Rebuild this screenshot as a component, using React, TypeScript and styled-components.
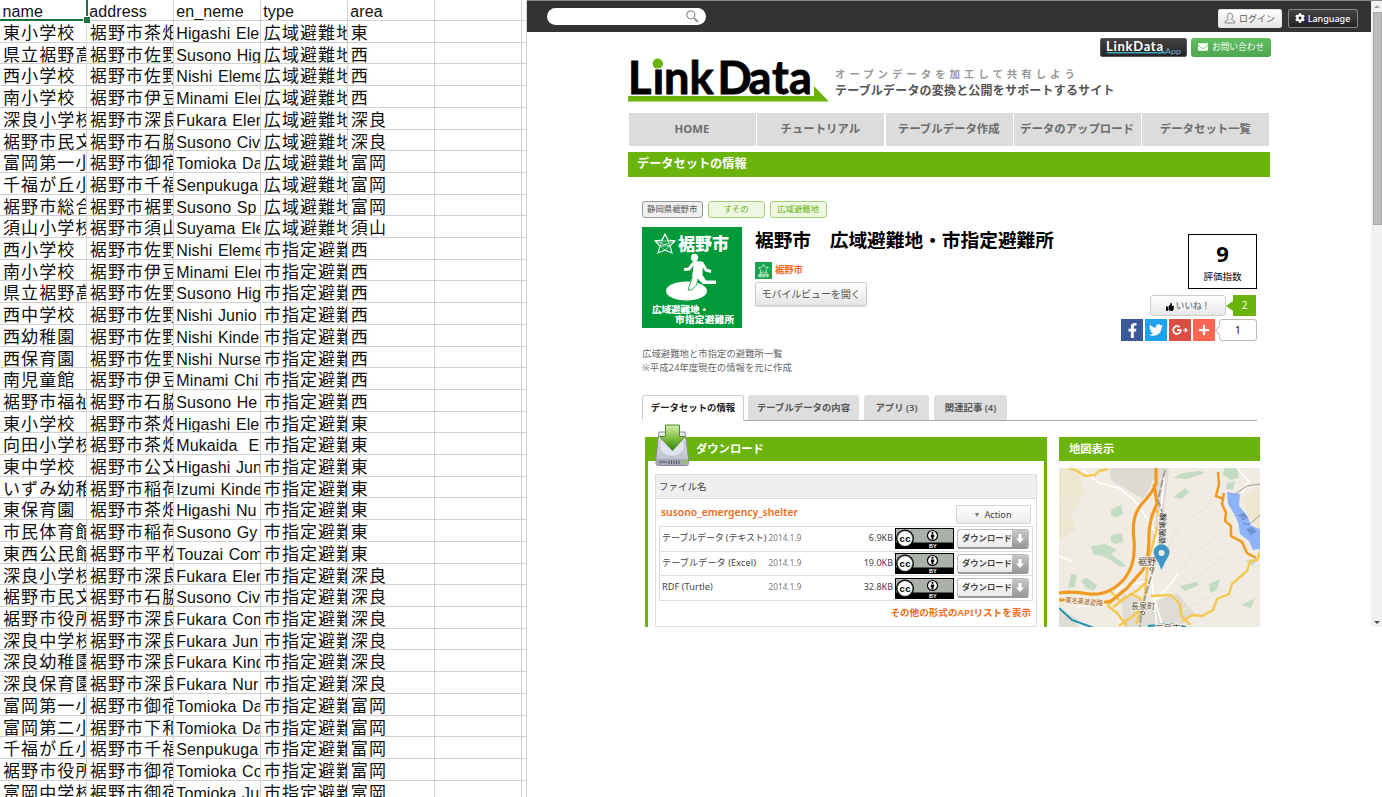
import React from "react";
import styled, { createGlobalStyle } from "styled-components";
import { FaFacebookF, FaTwitter, FaGooglePlusG, FaPlus, FaThumbsUp, FaCog, FaEnvelope } from "react-icons/fa";

const GREEN = "#6ab40c";

const Global = createGlobalStyle`
  *{box-sizing:border-box}
  body{margin:0;background:#fff;overflow:hidden;font-family:"Noto Sans","Noto Sans CJK JP",sans-serif;color:#444}
`;

const Page = styled.div`
  display: flex;
  width: 1382px;
  height: 797px;
  overflow: hidden;
`;

/* ---------- spreadsheet ---------- */

const Sheet = styled.div`
  width: 527px;
  flex: none;
  height: 797px;
  overflow: hidden;
  color: #111;
`;
const SheetRow = styled.div<{ $head?: boolean }>`
  display: grid;
  grid-template-columns: 86.8px 87px 87px 87px 87px 87px 5.2px;
  grid-template-rows: 100%;
  height: ${(p) => (p.$head ? 21 : 21.71)}px;
  ${(p) => p.$head && "line-height: 23px;"}
  ${(p) => !p.$head && "line-height: 26px;"}
`;
const SheetCell = styled.div<{ $latin?: boolean }>`
  position: relative;
  border-right: 1px solid #d3d3d3;
  border-bottom: 1px solid #d0d0d0;
  padding-left: ${(p) => (p.$latin ? 2.5 : 3)}px;
  overflow: hidden;
  white-space: pre;
  font-size: ${(p) => (p.$latin ? 16 : 17)}px;
  letter-spacing: ${(p) => (p.$latin ? 0.1 : 1.1)}px;
  word-spacing: 1px;
  font-family: "Liberation Sans", "Noto Sans CJK JP", sans-serif;
`;
const NameCell = styled(SheetCell)`
  line-height: 25px;
`;
const ActiveCell = styled(SheetCell)`
  overflow: visible;
  border-right: 0;
  &::before {
    content: "";
    position: absolute;
    left: 0;
    right: 4px;
    bottom: -1px;
    height: 2px;
    background: #1a7340;
  }
  &::after {
    content: "";
    position: absolute;
    right: -1px;
    top: 0;
    width: 2px;
    height: 16px;
    background: #1a7340;
  }
`;
const FillHandle = styled.i`
  position: absolute;
  z-index: 1;
  right: -3px;
  bottom: -3px;
  width: 6px;
  height: 6px;
  background: #1a7340;
`;

const H = "広域避難地";
const S = "市指定避難";
const rows: string[][] = [
  ["東小学校", "裾野市茶畑", "Higashi Ele", H, "東"],
  ["県立裾野高", "裾野市佐野", "Susono Hig", H, "西"],
  ["西小学校", "裾野市佐野", "Nishi Eleme", H, "西"],
  ["南小学校", "裾野市伊豆", "Minami Elem", H, "西"],
  ["深良小学校", "裾野市深良", "Fukara Elem", H, "深良"],
  ["裾野市民文", "裾野市石脇", "Susono Civ", H, "深良"],
  ["富岡第一小", "裾野市御宿", "Tomioka Da", H, "富岡"],
  ["千福が丘小", "裾野市千福", "Senpukuga", H, "富岡"],
  ["裾野市総合", "裾野市裾野", "Susono Sp", H, "富岡"],
  ["須山小学校", "裾野市須山", "Suyama Ele", H, "須山"],
  ["西小学校", "裾野市佐野", "Nishi Eleme", S, "西"],
  ["南小学校", "裾野市伊豆", "Minami Elem", S, "西"],
  ["県立裾野高", "裾野市佐野", "Susono Hig", S, "西"],
  ["西中学校", "裾野市佐野", "Nishi Junio", S, "西"],
  ["西幼稚園", "裾野市佐野", "Nishi Kinde", S, "西"],
  ["西保育園", "裾野市佐野", "Nishi Nurse", S, "西"],
  ["南児童館", "裾野市伊豆", "Minami Chi", S, "西"],
  ["裾野市福祉", "裾野市石脇", "Susono He", S, "西"],
  ["東小学校", "裾野市茶畑", "Higashi Ele", S, "東"],
  ["向田小学校", "裾野市茶畑", "Mukaida  E", S, "東"],
  ["東中学校", "裾野市公文", "Higashi Jun", S, "東"],
  ["いずみ幼稚", "裾野市稲荷", "Izumi Kinde", S, "東"],
  ["東保育園", "裾野市茶畑", "Higashi Nu", S, "東"],
  ["市民体育館", "裾野市稲荷", "Susono Gy", S, "東"],
  ["東西公民館", "裾野市平松", "Touzai Com", S, "東"],
  ["深良小学校", "裾野市深良", "Fukara Elem", S, "深良"],
  ["裾野市民文", "裾野市石脇", "Susono Civ", S, "深良"],
  ["裾野市役所", "裾野市深良", "Fukara Com", S, "深良"],
  ["深良中学校", "裾野市深良", "Fukara Jun", S, "深良"],
  ["深良幼稚園", "裾野市深良", "Fukara Kind", S, "深良"],
  ["深良保育園", "裾野市深良", "Fukara Nur", S, "深良"],
  ["富岡第一小", "裾野市御宿", "Tomioka Da", S, "富岡"],
  ["富岡第二小", "裾野市下和", "Tomioka Da", S, "富岡"],
  ["千福が丘小", "裾野市千福", "Senpukuga", S, "富岡"],
  ["裾野市役所", "裾野市御宿", "Tomioka Co", S, "富岡"],
  ["富岡中学校", "裾野市御宿", "Tomioka Ju", S, "富岡"],
];

const Spreadsheet = () => (
  <Sheet>
    <SheetRow $head>
      <ActiveCell $latin>name<FillHandle /></ActiveCell>
      {["address", "en_neme", "type", "area", "", ""].map((t, i) => (
        <SheetCell key={i} $latin>{t}</SheetCell>
      ))}
    </SheetRow>
    {rows.map((r, i) => (
      <SheetRow key={i}>
        {r.map((t, j) => (j === 2 ? <NameCell key={j} $latin>{t}</NameCell> : <SheetCell key={j}>{t}</SheetCell>))}
        <SheetCell /><SheetCell />
      </SheetRow>
    ))}
  </Sheet>
);

/* ---------- browser pane ---------- */

const Browser = styled.div`
  display: flex;
  width: 855px;
  height: 627px;
  overflow: hidden;
`;
const Site = styled.div`
  width: 844px;
  flex: none;
`;
const Scrollbar = styled.div`
  width: 11px;
  display: flex;
  flex-direction: column;
  align-items: center;
  justify-content: space-between;
  background: #f1f1f1;
  border-top: 1px solid #888;
  padding: 4px 0 3px 1px;
`;
const Arrow = styled.i<{ $down?: boolean }>`
  border: 3px solid transparent;
  border-top-width: ${(p) => (p.$down ? 3 : 0)}px;
  border-bottom-width: ${(p) => (p.$down ? 0 : 3)}px;
  border-top-color: #505050;
  border-bottom-color: #a3a3a3;
`;
const Thumb = styled.div`
  width: 9px;
  height: 213px;
  margin: 4px 0 auto;
  background: #bcbcbc;
  border: 1px solid #a9a9a9;
`;

const TopBar = styled.div`
  height: 32px;
  display: flex;
  align-items: center;
  justify-content: space-between;
  padding: 2px 13.5px 0 20px;
  background: #333;
  border-top: 1px solid #888;
`;
const Search = styled.div`
  width: 158.5px;
  height: 16.5px;
  border-radius: 9px;
  background: #fff;
  display: flex;
  justify-content: flex-end;
  align-items: center;
  padding-right: 7px;
  margin-bottom: 2px;
`;
const TopButtons = styled.div`
  display: flex;
  gap: 6px;
  margin-top: 1px;
`;
const TopButton = styled.div<{ $dark?: boolean }>`
  width: ${(p) => (p.$dark ? 70 : 64)}px;
  height: 19px;
  display: flex;
  align-items: center;
  justify-content: center;
  gap: 3px;
  border-radius: 2px;
  white-space: nowrap;
  font-size: 9px;
  border: 1px solid ${(p) => (p.$dark ? "#888" : "#e5e5e5")};
  background: ${(p) => (p.$dark ? "linear-gradient(#444,#222)" : "linear-gradient(#fff,#e6e6e6)")};
  color: ${(p) => (p.$dark ? "#fff" : "#555")};
  font-weight: ${(p) => (p.$dark ? 500 : 400)};
`;

const Content = styled.div`
  width: 643px;
  margin-left: 101px;
`;
const HeaderLinks = styled.div`
  display: flex;
  justify-content: flex-end;
  gap: 4px;
  padding-top: 6px;
  height: 25px;
`;
const AppLink = styled.div`
  width: 87px;
  height: 19px;
  border-radius: 2px;
  border: 1px solid #555;
  background: linear-gradient(#444, #222);
`;
const ContactLink = styled.div`
  width: 80px;
  height: 19px;
  display: flex;
  align-items: center;
  justify-content: center;
  gap: 4px;
  border-radius: 3px;
  background: linear-gradient(#5fbf5f, #4fa64f);
  color: #fff;
  font-size: 8.7px;
  line-height: 14px;
  padding-bottom: 1px;
  white-space: nowrap;
`;
const Brand = styled.div`
  display: flex;
  height: 56px;
`;
const Tagline = styled.div`
  padding: 9px 0 0 6px;
  white-space: nowrap;
`;
const TagSmall = styled.div`
  font-size: 10.5px;
  line-height: 16px;
  letter-spacing: 3.9px;
  color: #999;
  font-weight: 700;
`;
const TagMain = styled.div`
  font-size: 12px;
  line-height: 17px;
  letter-spacing: 0.19px;
  color: #555;
  font-weight: 700;
`;

const Nav = styled.nav`
  display: grid;
  grid-template-columns: repeat(5, 1fr);
  gap: 1.4px;
  width: 640.4px;
  margin: 0 0 6px 1px;
`;
const NavItem = styled.div`
  height: 33px;
  padding: 0 1px 3px 0;
  display: flex;
  align-items: center;
  justify-content: center;
  background: #dcdcdc;
  color: #6c6c6c;
  font-size: 11.4px;
  font-weight: 700;
  white-space: nowrap;
`;
const SectionBar = styled.div`
  width: 642px;
  height: 25px;
  padding-left: 9px;
  background: ${GREEN};
  color: #fff;
  font-size: 12.2px;
  font-weight: 700;
  line-height: 23px;
`;

const Tags = styled.div`
  display: flex;
  gap: 5px;
  padding: 24px 0 0 13.7px;
`;
const Tag = styled.div<{ $w: number; $gray?: boolean }>`
  width: ${(p) => p.$w}px;
  height: 17px;
  border-radius: 3px;
  border: 1px solid ${(p) => (p.$gray ? "#999" : "#a5d175")};
  background: ${(p) => (p.$gray ? "#efefef" : "#edf7e2")};
  color: ${(p) => (p.$gray ? "#555" : GREEN)};
  font-size: 8.4px;
  line-height: 13px;
  text-align: center;
  white-space: nowrap;
`;

const Hero = styled.div`
  display: flex;
  height: 114px;
  margin: 9px 0 0 14px;
`;
const HeroText = styled.div`
  width: 350px;
  margin-left: 13px;
`;
const Title = styled.h1`
  margin: 0;
  font-size: 18.7px;
  line-height: 25px;
  color: #000;
  font-weight: 700;
  white-space: nowrap;
`;
const Owner = styled.div`
  display: flex;
  align-items: center;
  gap: 3px;
  height: 17px;
  margin-top: 10px;
  color: #f26a1b;
  font-size: 9.3px;
  line-height: 14px;
  padding-bottom: 1px;
  font-weight: 700;
`;
const MobileButton = styled.div`
  width: 112px;
  height: 24px;
  margin-top: 3px;
  border: 1px solid #ccc;
  border-radius: 2px;
  background: linear-gradient(#fff, #e6e6e6);
  color: #555;
  font-size: 10.2px;
  letter-spacing: -0.3px;
  line-height: 22px;
  text-align: center;
  white-space: nowrap;
  box-shadow: 0 1px 1px #ddd;
`;
const HeroSide = styled.div`
  flex: 1;
  padding: 7px 14px 0 0;
  display: flex;
  flex-direction: column;
  align-items: flex-end;
`;
const Score = styled.div`
  width: 69px;
  height: 55px;
  border: 1px solid #000;
  text-align: center;
  color: #000;
  font-size: 9.5px;
  line-height: 12px;
  padding-top: 6px;
`;
const ScoreValue = styled.div`
  font: 700 22px/24px "Noto Sans", sans-serif;
  margin-bottom: 6px;
`;
const LikeRow = styled.div`
  display: flex;
  margin-top: 6px;
  height: 21px;
  padding-right: 1px;
`;
const Like = styled.div`
  width: 76px;
  display: flex;
  align-items: center;
  justify-content: center;
  gap: 2px;
  font-size: 8.6px;
  color: #555;
  border: 1px solid #ccc;
  border-radius: 3px;
  background: linear-gradient(#fff, #e8e8e8);
  & svg { color: #000; margin-top: 2px; }
`;
const LikeTip = styled.i`
  width: 7px;
  border: 5px solid transparent;
  border-right: 7px solid ${GREEN};
  border-left: 0;
  align-self: center;
`;
const LikeCount = styled.div`
  width: 23px;
  background: ${GREEN};
  color: #fff;
  font-size: 10px;
  line-height: 21px;
  text-align: center;
`;
const Share = styled.div`
  display: flex;
  gap: 2px;
  margin-top: 3px;
  height: 22px;
`;
const ShareIcon = styled.div<{ $bg: string }>`
  width: 22px;
  display: flex;
  align-items: center;
  justify-content: center;
  background: ${(p) => p.$bg};
  color: #fff;
`;
const ShareCount = styled.div`
  position: relative;
  width: 38px;
  margin-left: 2px;
  border: 1px solid #bbb;
  border-radius: 3px;
  font-size: 11px;
  line-height: 19px;
  text-align: center;
  color: #222;
  &::before {
    content: "";
    position: absolute;
    left: -4px;
    top: 7px;
    width: 6px;
    height: 6px;
    background: #fff;
    border: solid #bbb;
    border-width: 0 0 1px 1px;
    transform: rotate(45deg);
  }
`;

const Description = styled.p`
  margin: 6px 0 0 14px;
  height: 28px;
  font-size: 9.4px;
  line-height: 14px;
  color: #666;
  white-space: nowrap;
`;

const Tabs = styled.div`
  display: flex;
  width: 615px;
  height: 26px;
  margin: 20px 0 0 14px;
  border-bottom: 1px solid #aaa;
`;
const Tab = styled.div<{ $w: number; $on?: boolean }>`
  width: ${(p) => p.$w}px;
  height: ${(p) => (p.$on ? 26 : 25)}px;
  margin-right: ${(p) => (p.$on ? 4 : 5)}px;
  border-radius: 3px 3px 0 0;
  border: 1px solid ${(p) => (p.$on ? "#ccc" : "#dedede")};
  border-bottom: 0;
  background: ${(p) => (p.$on ? "#fff" : "#dedede")};
  color: ${(p) => (p.$on ? "#222" : "#555")};
  font-size: 9.4px;
  font-weight: 600;
  line-height: 24px;
  text-align: center;
  white-space: nowrap;
`;

const Columns = styled.div`
  display: flex;
  gap: 12px;
  margin: 16px 0 0 17px;
`;
const Download = styled.section`
  width: 402px;
  height: 190px;
  border: solid ${GREEN};
  border-width: 0 3px;
`;
const PanelTitle = styled.div<{ $inset: number }>`
  height: 24px;
  display: flex;
  padding-left: ${(p) => p.$inset}px;
  background: ${GREEN};
  color: #fff;
  font-size: 11.3px;
  font-weight: 700;
  line-height: 23px;
`;
const DriveIcon = styled.svg`
  position: relative;
  top: -13px;
  flex: none;
  margin-right: 6px;
`;
const FileTable = styled.div`
  width: 382px;
  height: 153px;
  margin: 13px 0 0 7px;
  border: 1px solid #ddd;
`;
const FileHead = styled.div`
  height: 24px;
  padding-left: 3px;
  background: #efefef;
  border-bottom: 1px solid #ddd;
  font-size: 9.5px;
  line-height: 23px;
`;
const DatasetRow = styled.div`
  height: 27px;
  display: flex;
  justify-content: space-between;
  padding: 5px 5px 0;
`;
const DatasetName = styled.div`
  color: #f26a1b;
  font-size: 10.3px;
  letter-spacing: 0.04px;
  font-weight: 600;
  line-height: 16px;
`;
const ActionButton = styled.div`
  display: flex;
  align-items: center;
  justify-content: center;
  gap: 5px;
  width: 75px;
  height: 19px;
  margin-top: 1px;
  border: 1px solid #d5d5d5;
  border-radius: 2px;
  background: linear-gradient(#fff, #ececec);
  font-size: 9.2px;
`;
const Caret = styled.i`
  border: 2.5px solid transparent;
  border-top: 4px solid #777;
  border-bottom: 0;
`;
const FileRows = styled.div`
  margin: 0 3px;
  border: 1px solid #ddd;
  border-top: 0;
`;
const FileRow = styled.div`
  display: grid;
  grid-template-columns: 106.5px 75px 51.5px 62px 1fr;
  align-items: center;
  height: 24.7px;
  padding-left: 2px;
  border-top: 1px solid #ddd;
  font-size: 9.1px;
  line-height: 20px;
  white-space: nowrap;
`;
const FileName = styled.span<{ $tight?: boolean }>`
  letter-spacing: ${(p) => (p.$tight ? -0.2 : 0.1)}px;
  padding-bottom: 2px;
`;
const FileDate = styled.span`
  font-size: 8.1px;
  letter-spacing: 0.1px;
  padding-bottom: 2px;
  color: #777;
`;
const FileSize = styled.span`
  text-align: right;
  padding: 0 2px 2px 0;
  font-size: 9px;
`;
const DownloadButton = styled.div`
  display: flex;
  width: 72px;
  height: 20px;
  border-radius: 3px;
  border: 1px solid #bbb;
  border-bottom: 2px solid #999;
  background: linear-gradient(#fff, #e9e9e9);
  font-size: 8.3px;
  font-weight: 700;
  line-height: 16px;
  padding-left: 4px;
  justify-content: space-between;
  overflow: hidden;
`;
const DownloadEnd = styled.span`
  width: 16px;
  height: 17px;
  display: flex;
  align-items: center;
  justify-content: center;
  background: linear-gradient(#c8c8c8, #999);
`;
const ApiLink = styled.div`
  padding-right: 5px;
  text-align: right;
  color: #f26a1b;
  font-size: 9.6px;
  font-weight: 600;
  line-height: 23px;
  white-space: nowrap;
`;
const MapPanel = styled.section`
  width: 201px;
`;
const MapView = styled.svg`
  display: block;
  margin-top: 7px;
`;

const Logo = () => (
  <svg width="201" height="46" viewBox="628 57 201 46">
    <text x="628 652.7 664 689.5 717.5 748.5 772 789" y="93.6" fontFamily="Lato" fontWeight="700" fontSize="45" stroke="#000" strokeWidth=".9">LinkData</text>
    <circle cx="657.6" cy="63.6" r="5" fill={GREEN} />
    <path d="M628 96H814V86L828.7 101.6H628z" fill={GREEN} />
  </svg>
);

const AppLogo = () => (
  <svg width="85" height="17" viewBox="0 0 85 17">
    <text x="5" y="11.5" fontFamily="Lato" fontWeight="700" fontSize="13" fill="#fff" textLength="57">LinkData</text>
    <path d="M6 13H61V10.5L65 14.5H6z" fill="#3aa7b8" />
    <text x="64" y="14.5" fontFamily="Lato" fontSize="7" fill="#7ac" textLength="16" lengthAdjust="spacingAndGlyphs">App</text>
  </svg>
);

const star = "M0-10 3-4 10-3 5 2 7 9 0 6-7 9-5 2-10-3-3-4z";

const ShelterIcon = () => (
  <svg width="100" height="101" viewBox="0 0 100 101">
    <rect width="100" height="101" fill="#009a3a" />
    <g transform="translate(23 17)" fill="none" stroke="#fff" strokeWidth="1.1">
      <path d={star} />
      <path d="M0-10 5 2-10-3H10L-5 2zM0 6 5 2-5 2z" strokeWidth=".6" />
    </g>
    <text x="36" y="22.5" fontSize="17" fontWeight="900" fill="#fff" textLength="51">裾野市</text>
    <ellipse cx="44.5" cy="64" rx="20.5" ry="9.5" fill="#fff" />
    <circle cx="52.5" cy="30.5" r="3.7" fill="#fff" />
    <path d="M42 42.5 47 42 52 35.5 60 36 64 43 69 44.5" stroke="#fff" strokeWidth="3" fill="none" strokeLinejoin="round" />
    <path d="M52 36H61L60.5 48 64 53.5H74V57H61L56 52 55 58 50 63H45L50 50z" fill="#fff" />
    <path d="M50.5 50 46 63H49.5L54.5 58 56 52" fill="none" stroke="#009a3a" strokeWidth=".8" />
    <text x="10" y="85.5" fontSize="9.6" fontWeight="900" fill="#fff" textLength="57">広域避難地・</text>
    <text x="33" y="96" fontSize="9.6" fontWeight="900" fill="#fff" textLength="59">市指定避難所</text>
  </svg>
);

const OwnerIcon = () => (
  <svg width="17" height="17" viewBox="0 0 17 17">
    <rect width="17" height="17" fill="#1ba350" />
    <path d={star} transform="translate(8.5 7) scale(.48)" fill="none" stroke="#d5f0dd" strokeWidth="1.6" />
    <text x="3" y="15" fontSize="3.7" fill="#d5f0dd">裾野市</text>
  </svg>
);

const Drive = () => (
  <DriveIcon width="35" height="43" viewBox="0 0 35 43">
    <defs>
      <linearGradient id="dg" x2="0" y2="1"><stop stopColor="#d7f0ae" /><stop offset=".55" stopColor="#7cb93a" /><stop offset="1" stopColor="#2f8110" /></linearGradient>
      <linearGradient id="dm" x2="0" y2="1"><stop stopColor="#ececf2" /><stop offset="1" stopColor="#b5b8c5" /></linearGradient>
    </defs>
    <path d="M4 8H30L33.5 34V39.5Q33.5 41.5 31 41.5H3.5Q1 41.5 1 39.5V34z" fill="url(#dm)" stroke="#888b98" />
    <ellipse cx="17" cy="22" rx="13" ry="10.5" fill="#dfe2ec" stroke="#b9bdca" />
    <path d="M1.5 35H33V39Q33 41 31 41H3.5Q1.5 41 1.5 39z" fill="#a5a9b8" />
    <path d="M4 38H12M14 36.5V40M16.5 36.5V40M19 36.5V40M21.5 36.5V40M24 36.5V40" stroke="#556" strokeWidth="1.1" />
    <circle cx="29.5" cy="38" r="1.4" fill="#7ee01c" />
    <path d="M10.5 1H24.5V12.5H30L17.5 26.5 4.5 12.5H10.5z" fill="url(#dg)" stroke="#4c8a24" />
  </DriveIcon>
);

const CcBadge = () => (
  <svg width="59" height="21" viewBox="0 0 59 21">
    <rect width="59" height="21" fill="#000" />
    <rect x="1" y="1" width="57" height="13.5" fill="#abb1a9" />
    <circle cx="10" cy="10.5" r="9" fill="#000" />
    <circle cx="10" cy="10.5" r="7.4" fill="#fff" stroke="#abb1a9" strokeWidth=".5" />
    <text x="4.5" y="13.5" fontSize="9.5" fontWeight="900" fontFamily="Liberation Sans" fill="#000" textLength="11">cc</text>
    <circle cx="37.5" cy="7.5" r="5" fill="#fff" stroke="#000" strokeWidth="1.2" />
    <circle cx="37.5" cy="4.8" r="1.1" />
    <path d="M35.8 6.5H39.2V9H38.5V11.5H36.5V9H35.8z" />
    <text x="34" y="20" fontSize="5.5" fontWeight="700" fontFamily="Liberation Sans" fill="#fff">BY</text>
  </svg>
);

const AreaMap = () => (
  <MapView width="201" height="160" viewBox="0 0 201 160">
    <rect width="201" height="160" fill="#f0ece3" />
    <path d="M0 0H18L25 25 12 45 17 62 0 72zM183 30 201 18V60L190 50z" fill="#ede6d0" />
    <path d="M50 0H96L92 18 84 31 52 12z" fill="#dfd9d3" />
    <path d="M93 0H110L105 45 100 75H92L98 40zM62 125 92 135 118 125 135 145 120 160H65zM0 142 18 150V160H0z" fill="#dfdbd5" />
    <g fill="#c5dcc4">
      <path d="M52 42 62 37 64 45 58 50 52 47zM52 67 62 65 65 73 58 76 52 74zM32 78 46 76 58 82 52 86 68 98 62 99 48 90 40 87 34 86zM12 106 18 107 16 119 9 120zM22 112 28 110 38 117 35 123 27 120zM114 10 124 5 142 3 145 5 128 11zM114 29 126 20 131 24 122 31zM120 118 138 114 140 117 126 123zM150 116 161 111 158 122 151 125zM165 0H178L180 10 172 12 164 7zM168 15 176 13 174 22 167 21zM186 93 198 92 194 98zM182 137 196 130 192 140z" />
    </g>
    <g fill="none" stroke="#fff" strokeWidth="1.6">
      <path d="M24 2 40 15 60 20 75 32 88 50 96 63 97 80 91 100M106 2 101 50 92 105 98 160M0 88 12 93M18 139 50 134 60 120 92 112M178 0 190 13 183 25M120 105 110 118 96 132 104 160" />
    </g>
    <g fill="none" stroke="#e9e5de" strokeWidth="1.5">
      <path d="M154 35 130 51 114 67 107 85M160 68 135 85 120 103M170 84 148 102 134 111M3 32 18 45M124 142 154 127" />
    </g>
    <path d="M168 24 181 26 180 38 189 49 192 58 201 61V81L194 82 190 73 181 66 179 54 174 44 169 36z" fill="#8eb3fb" />
    <path d="M176 26 188 18 201 16M192 55 201 47" stroke="#999" fill="none" />
    <g fill="none" stroke="#f5c851" strokeWidth="2.4" strokeLinejoin="round">
      <path d="M10 0 18 3 26 8 36 7 40 3 49 1M97 41 101 51 95 72 90 90 87 112 86 128 77 156M52 124 61 133 79 122 89 112M57 128 49 138 58 145 68 158M54 139 72 126 81 130 84 139 74 148 60 158M92 128 112 127 121 136 122 147 131 157M123 153 134 147 143 148 154 142 158 131 170 126 173 116 181 109 188 103 191 93 198 92 201 84" />
    </g>
    <g fill="none" stroke="#f29a20" strokeWidth="3.2">
      <path d="M97 0V16Q94 24 82 37Q72 49 75 72Q77 96 66 110Q51 128 30 126Q15 123 0 125M95 16 98 36Q89 53 90 73Q89 95 83 103L68 120 56 130Q50 135 45 134M0 132H6" />
      <path d="M159 4 160 16 157 28 164 31 165 25 163 36 167 45 166 53 172 58 172 68 183 74 188 85 197 90" strokeWidth="2.5" />
    </g>
    <path d="M106 2 99 32 104 47M103 70 94 102 88 122 82 144 81 160" stroke="#999" strokeWidth="1.8" strokeDasharray="8 2" fill="none" />
    <path d="M0 140 13 152 35 160M89 158 110 156 127 159" stroke="#1b93ad" strokeWidth="2" fill="none" />
    <g fontSize="9" fill="#5c4c3a" stroke="#f5f2eb" strokeWidth="2" paintOrder="stroke">
      <text x="79" y="97">裾野</text>
      <text x="72" y="141" fontSize="8">長泉町</text>
      <text x="96" y="163" fontSize="8.5">三島市</text>
      <text x="6" y="134.5" fontSize="7.2" fill="#a65c18" textLength="38" transform="rotate(5 6 134.5)">東名高速道路</text>
      <text transform="translate(106 76) rotate(-88)" fontSize="8" fill="#111" textLength="31">御殿場線</text>
      <text transform="translate(179 47) rotate(58)" fontSize="8" fill="#5577aa" stroke="none" textLength="24">芦ノ湖</text>
    </g>
    <circle cx="92.5" cy="101" r="1.6" fill="#fff" stroke="#666" />
    <circle cx="84" cy="145" r="1.6" fill="#fff" stroke="#666" />
    <path d="M102.5 102Q100 95 96 89A8 8 0 1 1 109 89Q105 95 102.5 102z" fill="#3d98c5" />
    <circle cx="102.5" cy="85" r="3" fill="#f0ece3" />
  </MapView>
);

const files = [
  ["テーブルデータ (テキスト)", "6.9KB"],
  ["テーブルデータ (Excel)", "19.0KB"],
  ["RDF (Turtle)", "32.8KB"],
];

export default function App() {
  return (
    <Page>
      <Global />
      <Spreadsheet />
      <Browser>
        <Site>
          <TopBar>
            <Search>
              <svg width="13" height="13" viewBox="0 0 13 13" fill="none" stroke="#999">
                <circle cx="4.8" cy="4.8" r="4" strokeWidth="1.3" />
                <path d="M8 8 12 12" strokeWidth="2.2" />
              </svg>
            </Search>
            <TopButtons>
              <TopButton>
                <svg width="12" height="12" viewBox="0 0 12 12" fill="#eee" stroke="#888">
                  <path d="M1 11V9.5L4.5 7.5Q3 5.5 3.3 3.5Q4 1 6 1T8.7 3.5Q9 5.5 7.5 7.5L11 9.5V11z" />
                </svg>
                ログイン
              </TopButton>
              <TopButton $dark><FaCog size={10} />Language</TopButton>
            </TopButtons>
          </TopBar>
          <Content>
            <HeaderLinks>
              <AppLink><AppLogo /></AppLink>
              <ContactLink><FaEnvelope size={10} />お問い合わせ</ContactLink>
            </HeaderLinks>
            <Brand>
              <Logo />
              <Tagline>
                <TagSmall>オープンデータを加工して共有しよう</TagSmall>
                <TagMain>テーブルデータの変換と公開をサポートするサイト</TagMain>
              </Tagline>
            </Brand>
            <Nav>
              {["HOME", "チュートリアル", "テーブルデータ作成", "データのアップロード", "データセット一覧"].map((t) => (
                <NavItem key={t}>{t}</NavItem>
              ))}
            </Nav>
            <SectionBar>データセットの情報</SectionBar>
            <Tags>
              <Tag $w={61} $gray>静岡県裾野市</Tag>
              <Tag $w={57}>すその</Tag>
              <Tag $w={57}>広域避難地</Tag>
            </Tags>
            <Hero>
              <ShelterIcon />
              <HeroText>
                <Title>裾野市　広域避難地・市指定避難所</Title>
                <Owner><OwnerIcon />裾野市</Owner>
                <MobileButton>モバイルビューを開く</MobileButton>
              </HeroText>
              <HeroSide>
                <Score><ScoreValue>9</ScoreValue>評価指数</Score>
                <LikeRow>
                  <Like><FaThumbsUp size={8} />いいね！</Like>
                  <LikeTip />
                  <LikeCount>2</LikeCount>
                </LikeRow>
                <Share>
                  <ShareIcon $bg="#3b5998"><FaFacebookF size={15} /></ShareIcon>
                  <ShareIcon $bg="#1da1f2"><FaTwitter size={14} /></ShareIcon>
                  <ShareIcon $bg="#dc4e41"><FaGooglePlusG size={16} /></ShareIcon>
                  <ShareIcon $bg="#ff6550"><FaPlus size={12} /></ShareIcon>
                  <ShareCount>1</ShareCount>
                </Share>
              </HeroSide>
            </Hero>
            <Description>広域避難地と市指定の避難所一覧<br />※平成24年度現在の情報を元に作成</Description>
            <Tabs>
              <Tab $w={102} $on>データセットの情報</Tab>
              <Tab $w={111}>テーブルデータの内容</Tab>
              <Tab $w={65}>アプリ (3)</Tab>
              <Tab $w={73}>関連記事 (4)</Tab>
            </Tabs>
            <Columns>
              <Download>
                <PanelTitle $inset={7}><Drive />ダウンロード</PanelTitle>
                <FileTable>
                  <FileHead>ファイル名</FileHead>
                  <DatasetRow>
                    <DatasetName>susono_emergency_shelter</DatasetName>
                    <ActionButton><Caret />Action</ActionButton>
                  </DatasetRow>
                  <FileRows>
                    {files.map(([name, size], i) => (
                      <FileRow key={name}>
                        <FileName $tight={i === 0}>{name}</FileName>
                        <FileDate>2014.1.9</FileDate>
                        <FileSize>{size}</FileSize>
                        <CcBadge />
                        <DownloadButton>
                          ダウンロード
                          <DownloadEnd>
                            <svg width="8" height="9" viewBox="0 0 8 9" fill="#fff"><path d="M2.5 0H5.5V4.5H8L4 9 0 4.5H2.5z" /></svg>
                          </DownloadEnd>
                        </DownloadButton>
                      </FileRow>
                    ))}
                  </FileRows>
                  <ApiLink>その他の形式のAPIリストを表示</ApiLink>
                </FileTable>
              </Download>
              <MapPanel>
                <PanelTitle $inset={10}>地図表示</PanelTitle>
                <AreaMap />
              </MapPanel>
            </Columns>
          </Content>
        </Site>
        <Scrollbar>
          <Arrow />
          <Thumb />
          <Arrow $down />
        </Scrollbar>
      </Browser>
    </Page>
  );
}
